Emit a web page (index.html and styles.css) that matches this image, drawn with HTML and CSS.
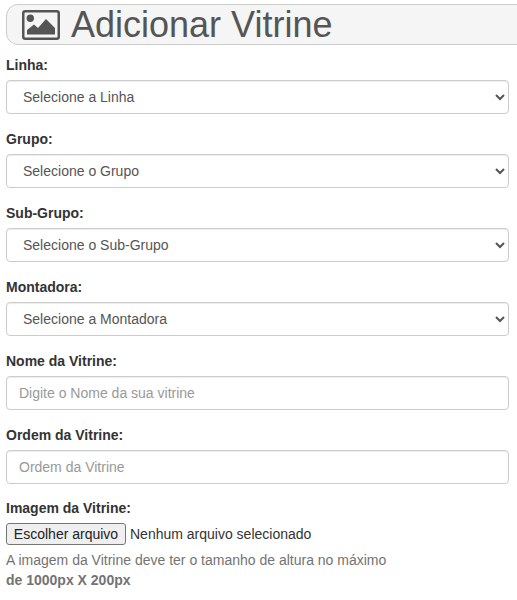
FILE: index.html
```html
<!DOCTYPE html>
<html lang="pt-BR">
  <head>
    <meta charset="UTF-8" />
    <meta name="viewport" content="width=device-width, initial-scale=1.0" />
    <title>Adicionar Vitrine</title>
    <link rel="stylesheet" href="styles.css">
  </head>
  <body>
    <div class="container">
      <h1 class="page-title">
        <svg class="title-icon" viewBox="0 0 38 30" aria-hidden="true">
          <rect x="1.25" y="1.25" width="35.5" height="27.5" rx="2" class="icon-frame" />
          <circle cx="8.3" cy="8.3" r="3.7" class="icon-fill" />
          <path d="M5 24.5V20l7-5.5 4 3.5 8-9 9 9v6.5z" class="icon-fill" />
        </svg>
        Adicionar Vitrine
      </h1>

      <form>
        <div class="form-group">
          <label for="linha">Linha:</label>
          <select id="linha" class="form-control">
            <option>Selecione a Linha</option>
          </select>
        </div>

        <div class="form-group">
          <label for="grupo">Grupo:</label>
          <select id="grupo" class="form-control">
            <option>Selecione o Grupo</option>
          </select>
        </div>

        <div class="form-group">
          <label for="subgrupo">Sub-Grupo:</label>
          <select id="subgrupo" class="form-control">
            <option>Selecione o Sub-Grupo</option>
          </select>
        </div>

        <div class="form-group">
          <label for="montadora">Montadora:</label>
          <select id="montadora" class="form-control">
            <option>Selecione a Montadora</option>
          </select>
        </div>

        <div class="form-group">
          <label for="nome">Nome da Vitrine:</label>
          <input type="text" id="nome" class="form-control" placeholder="Digite o Nome da sua vitrine" />
        </div>

        <div class="form-group">
          <label for="ordem">Ordem da Vitrine:</label>
          <input type="text" id="ordem" class="form-control" placeholder="Ordem da Vitrine" />
        </div>

        <div class="form-group image-group">
          <label>Imagem da Vitrine:</label>
          <div class="file-row">
            <button type="button" class="file-btn">Escolher arquivo</button>
            <span class="file-name">Nenhum arquivo selecionado</span>
          </div>
          <p class="help-text">
            A imagem da Vitrine deve ter o tamanho de altura no máximo<br />
            <strong>de 1000px X 200px</strong>
          </p>
        </div>
      </form>
    </div>
  </body>
</html>
```

FILE: styles.css
```css
* {
    box-sizing: border-box;
}

html,
body {
    overflow-x: hidden;
}

body {
    font-family: "Liberation Sans", Arial, sans-serif;
    font-size: 14px;
    line-height: 20px;
    color: #333;
    margin: 0;
    background: white;
}

.container {
    padding: 4px 8px 0 6px;
}

.page-title {
    display: flex;
    align-items: center;
    gap: 11px;
    height: 41px;
    margin: 0 -20px 10px 0;
    padding-left: 15px;
    background: #f5f5f5;
    border: 1px solid #ccc;
    border-radius: 12px;
    font-size: 36px;
    font-weight: 400;
    line-height: 40px;
    color: #555;
}

.title-icon {
    width: 38px;
    height: 30px;
    flex-shrink: 0;
}

.icon-frame {
    fill: none;
    stroke: #555;
    stroke-width: 2.5;
}

.icon-fill {
    fill: #555;
}

.form-group {
    margin-bottom: 15px;
}

.image-group {
    margin-top: -1px;
}

label {
    display: block;
    margin-bottom: 5px;
    font-weight: bold;
}

.form-control {
    display: block;
    width: 100%;
    height: 34px;
    padding: 6px 12px;
    font-family: inherit;
    font-size: 14px;
    line-height: 20px;
    color: #555;
    background: white;
    border: 1px solid #ccc;
    border-radius: 4px;
    box-shadow: inset 0 1px 1px rgba(0,0,0,0.075);
}

.form-control::placeholder {
    color: #999;
}

.file-row {
    display: flex;
    align-items: center;
    gap: 4px;
    height: 22px;
}

.file-btn {
    width: 120px;
    height: 22px;
    padding: 0;
    font-family: inherit;
    font-size: 14px;
    color: #222;
    background: #efefef;
    border: 1px solid #767676;
    border-radius: 3px;
}

.file-name {
    color: #333;
}

.help-text {
    margin: 5px 0 0;
    color: #737373;
}
```
